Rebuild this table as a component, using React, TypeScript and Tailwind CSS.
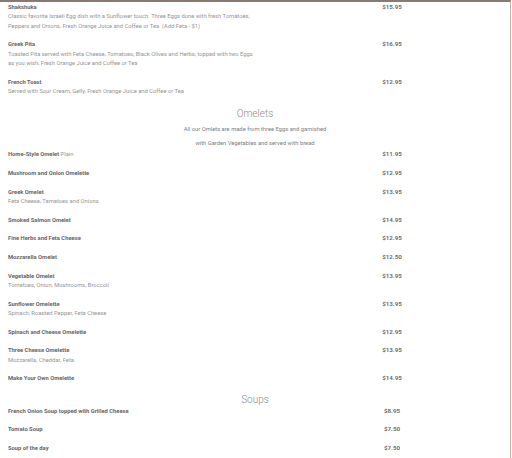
import type { ReactNode } from 'react'

type Item = { name: string; note?: string; desc?: ReactNode; price: string }

const breakfast: Item[] = [
  {
    name: 'Shakshuka',
    desc: (
      <>
        Classic favorite Israeli Egg dish with a Sunflower touch. Three Eggs done with fresh Tomatoes,
        <br />
        Peppers and Onions, Fresh Orange Juice and Coffee or Tea. (Add Feta - $1)
      </>
    ),
    price: '$15.95',
  },
  {
    name: 'Greek Pita',
    desc: (
      <>
        Toasted Pita served with Feta Cheese, Tomatoes, Black Olives and Herbs, topped with two Eggs
        <br />
        as you wish, Fresh Orange Juice and Coffee or Tea
      </>
    ),
    price: '$16.95',
  },
  { name: 'French Toast', desc: 'Served with Sour Cream, Gelly, Fresh Orange Juice and Coffee or Tea', price: '$12.95' },
]

const omelets: Item[] = [
  { name: 'Home-Style Omelet', note: 'Plain', price: '$11.95' },
  { name: 'Mushroom and Onion Omelette', price: '$12.95' },
  { name: 'Greek Omelet', desc: 'Feta Cheese, Tamatoes and Onions', price: '$13.95' },
  { name: 'Smoked Salmon Omelet', price: '$14.95' },
  { name: 'Fine Herbs and Feta Cheese', price: '$12.95' },
  { name: 'Mozzarella Omelet', price: '$12.50' },
  { name: 'Vegetable Omelet', desc: 'Tomatoes, Onion, Mushrooms, Broccoli', price: '$13.95' },
  { name: 'Sunflower Omelette', desc: 'Spinach, Roasted Pepper, Feta Cheese', price: '$13.95' },
  { name: 'Spinach and Cheese Omelette', price: '$12.95' },
  { name: 'Three Cheese Omelette', desc: 'Mozzarella, Cheddar, Feta', price: '$13.95' },
  { name: 'Make Your Own Omelette', price: '$14.95' },
]

const soups: Item[] = [
  { name: 'French Onion Soup topped with Grilled Cheese', price: '$8.95' },
  { name: 'Tomato Soup', price: '$7.50' },
  { name: 'Soup of the day', price: '$7.50' },
]

function MenuRow({ item }: { item: Item }) {
  return (
    <div className="grid grid-cols-[354px_60px] items-start leading-[9.3px]">
      <div className="whitespace-nowrap">
        <div>
          <span className="font-bold text-[#666666]">{item.name}</span>
          {item.note && <span className="text-[#959595]"> {item.note}</span>}
        </div>
        {item.desc && <div className="text-[#959595]">{item.desc}</div>}
      </div>
      <div className="text-center font-bold text-[#707070] text-[6.2px]">{item.price}</div>
    </div>
  )
}

function Section({ items }: { items: Item[] }) {
  return (
    <div className="flex flex-col gap-[9.4px] pl-2">
      {items.map((it) => (
        <MenuRow key={it.name} item={it} />
      ))}
    </div>
  )
}

export default function App() {
  return (
    <div className="w-[511px] h-[458px] overflow-hidden bg-white border-t-2 border-t-[#877a73] border-r border-r-[#c6b2a9] pt-px text-[5.8px] font-['Roboto',sans-serif]">
      <Section items={breakfast} />

      <div className="mt-[11px] text-center">
        <h2 className="text-[10px] leading-[14px] font-light text-[#8a8a8a]">Omelets</h2>
        <p className="leading-[14px] text-[#7d7d7d] mt-px">All our Omlets are made from three Eggs and garnished</p>
        <p className="leading-[14px] text-[#7d7d7d]">with Garden Vegetables and served with bread</p>
      </div>
      <Section items={omelets} />

      <h2 className="mt-[9px] text-center text-[10px] leading-[14px] font-light text-[#8a8a8a]">Soups</h2>
      <Section items={soups} />
    </div>
  )
}
